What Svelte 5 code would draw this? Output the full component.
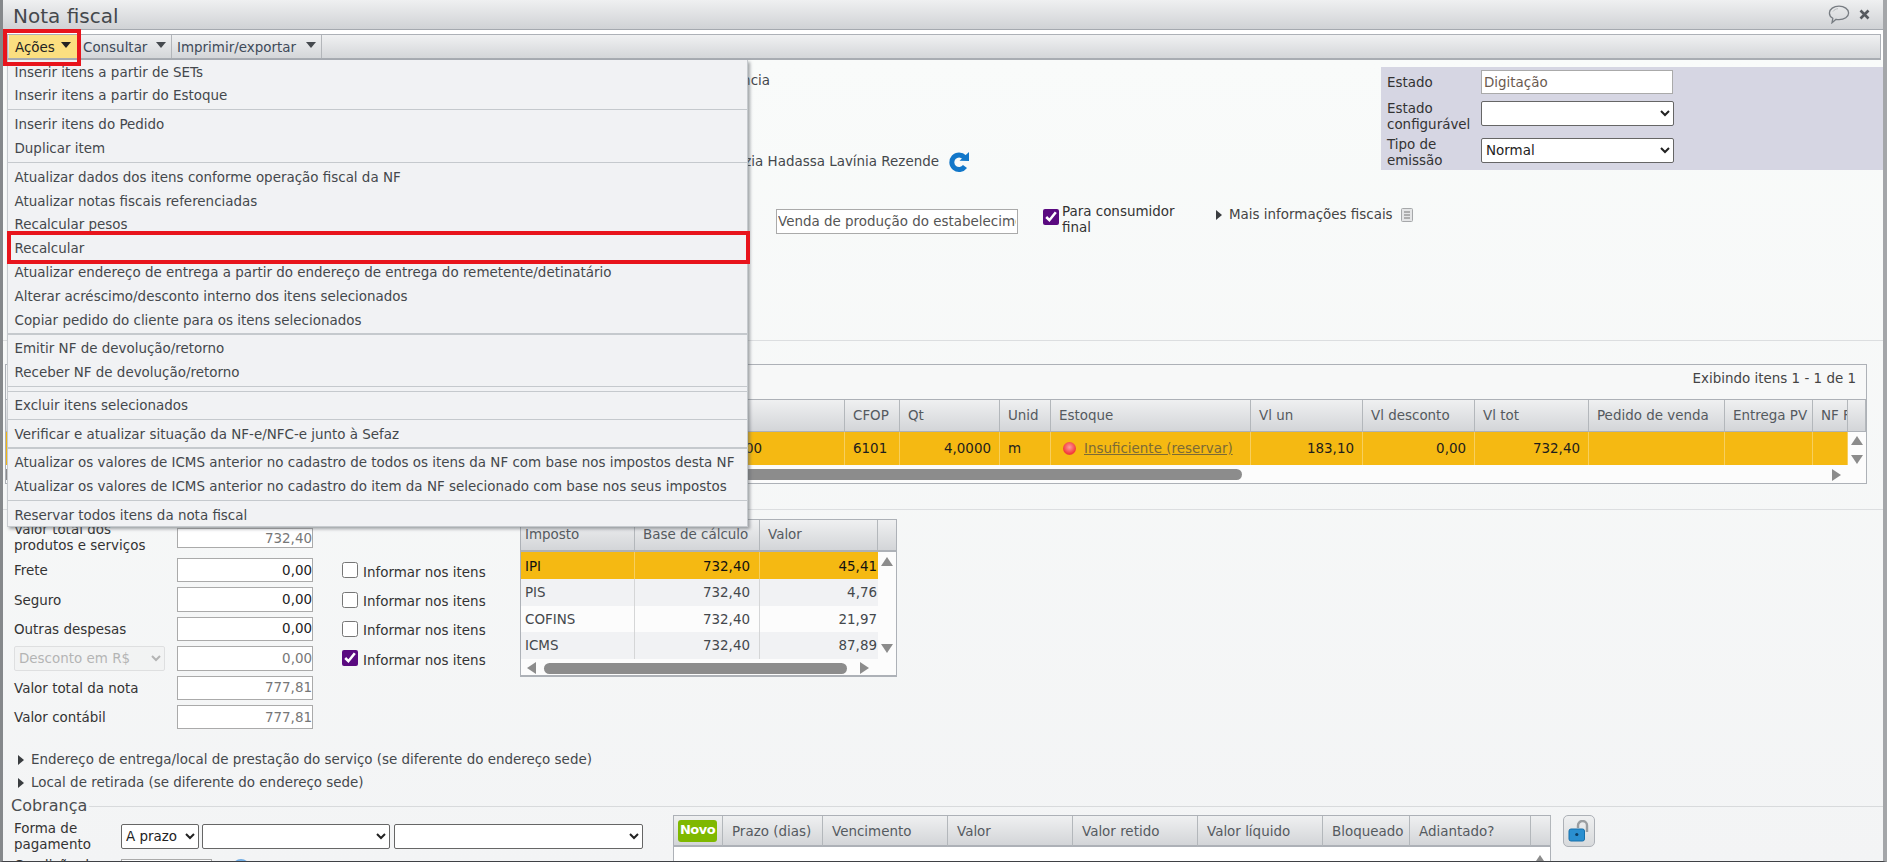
<script>
  const menu = [
    'Inserir itens a partir de SETs','Inserir itens a partir do Estoque','-',
    'Inserir itens do Pedido','Duplicar item','-',
    'Atualizar dados dos itens conforme operação fiscal da NF','Atualizar notas fiscais referenciadas','Recalcular pesos','Recalcular','Atualizar endereço de entrega a partir do endereço de entrega do remetente/detinatário','Alterar acréscimo/desconto interno dos itens selecionados','Copiar pedido do cliente para os itens selecionados','=',
    'Emitir NF de devolução/retorno','Receber NF de devolução/retorno','-','-',
    'Excluir itens selecionados','-',
    'Verificar e atualizar situação da NF-e/NFC-e junto à Sefaz','=',
    'Atualizar os valores de ICMS anterior no cadastro de todos os itens da NF com base nos impostos desta NF','Atualizar os valores de ICMS anterior no cadastro do item da NF selecionado com base nos seus impostos','-',
    'Reservar todos itens da nota fiscal'
  ];
  const fin = [
    { label: 'Frete', value: '0,00', checked: false },
    { label: 'Seguro', value: '0,00', checked: false },
    { label: 'Outras despesas', value: '0,00', checked: false }
  ];
  const taxes = [
    ['IPI','732,40','45,41','sel'],
    ['PIS','732,40','4,76','alt'],
    ['COFINS','732,40','21,97',''],
    ['ICMS','732,40','87,89','alt']
  ];
  const parcelas = ['Prazo (dias)','Vencimento','Valor','Valor retido','Valor líquido','Bloqueado','Adiantado?'];
</script>

<div class="window">
  <header class="titlebar">
    <h1>Nota fiscal</h1>
    <div class="title-icons">
      <svg width="22" height="19" viewBox="0 0 22 19"><path d="M11 1.2c5.300 0 9.600 2.900 9.600 6.700s-4.300 6.700-9.600 6.700c-1 0-2-.1-2.900-.3L4 17.800l.8-4.500C2.700 12.100 1.400 10.100 1.400 7.900 1.400 4.100 5.700 1.200 11 1.200z" fill="none" stroke="#777c82" stroke-width="1.300"/><path d="M5 6.500c1-1.700 3-2.700 5-2.800" fill="none" stroke="#b9bcc0" stroke-width="1"/></svg>
      <svg width="11" height="11" viewBox="0 0 11 11"><path d="M1.500 1.500l8 8M9.500 1.500l-8 8" stroke="#55595e" stroke-width="2.600"/></svg>
    </div>
  </header>

  <div class="gap"></div>
  <nav class="toolbar">
    <button class="tb active"><span>Ações</span><i class="caret"></i></button>
    <button class="tb w93"><span>Consultar</span><i class="caret"></i></button>
    <button class="tb w150"><span>Imprimir/exportar</span><i class="caret"></i></button>
  </nav>

  <main>
    <section class="top">
      <div class="top-left">
        <div class="hidden-line">Referência</div>
        <div class="person"><span>Luzia Hadassa Lavínia Rezende</span>
          <svg width="22" height="21" viewBox="0 0 22 21"><path d="M17 14.500a7.300 7.300 0 1 1-.6-9.300" fill="none" stroke="#1277c9" stroke-width="5"/><path d="M11.500 8.800 21 9V0z" fill="#1277c9"/></svg>
        </div>
        <div class="nature">
          <input class="nat" value="Venda de produção do estabelecimento" />
          <label class="final"><input type="checkbox" checked /><span>Para consumidor<br />final</span></label>
          <div class="more"><i class="tri-r"></i><span>Mais informações fiscais</span>
            <svg width="12" height="14" viewBox="0 0 12 14"><rect x=".5" y=".5" width="11" height="13" rx="1" fill="#e4e5e6" stroke="#a6a8aa"/><path d="M3 4h6M3 7h6M3 10h6" stroke="#777" /></svg>
          </div>
        </div>
      </div>
      <div class="status">
        <div class="st-row"><span>Estado</span><input class="st-in" value="Digitação" readonly /></div>
        <div class="st-row"><span>Estado configurável</span><select class="st-sel"><option></option></select></div>
        <div class="st-row last"><span>Tipo de emissão</span><select class="st-sel"><option>Normal</option></select></div>
      </div>
    </section>

    <section class="items">
      <div class="grid-box">
        <div class="pager">Exibindo itens 1 - 1 de 1</div>
        <div class="igrid ihead">
          <div></div><div>CFOP</div><div>Qt</div><div>Unid</div><div>Estoque</div><div>Vl un</div><div>Vl desconto</div><div>Vl tot</div><div>Pedido de venda</div><div>Entrega PV</div><div class="clip">NF R</div><div></div>
        </div>
        <div class="igrid irow">
          <div class="ncm">7214.10.00</div><div>6101</div><div class="r">4,0000</div><div>m</div>
          <div class="stock"><i class="dot"></i><a href="#top">Insuficiente (reservar)</a></div>
          <div class="r">183,10</div><div class="r">0,00</div><div class="r">732,40</div><div></div><div></div><div></div>
          <div class="vscroll"><i class="tri-u"></i><i class="tri-d"></i></div>
        </div>
        <div class="hscroll"><div class="thumb long"></div><i class="tri-r big"></i></div>
      </div>
    </section>

    <section class="totals">
      <div class="fin">
        <div class="lbl">Valor total dos<br />produtos e serviços</div><input class="num ro short" value="732,40" readonly /><div></div>
        {#each fin as f}
          <div class="lbl">{f.label}</div><input class="num" value={f.value} />
          <label class="inform"><input type="checkbox" checked={f.checked} /><span>Informar nos itens</span></label>
        {/each}
        <select class="disc" disabled><option>Desconto em R$</option></select><input class="num ro" value="0,00" readonly />
        <label class="inform"><input type="checkbox" checked /><span>Informar nos itens</span></label>
        <div class="lbl">Valor total da nota</div><input class="num ro" value="777,81" readonly /><div></div>
        <div class="lbl">Valor contábil</div><input class="num ro" value="777,81" readonly /><div></div>
      </div>
      <div class="tax">
        <div class="tgrid thead"><div>Imposto</div><div>Base de cálculo</div><div>Valor</div><div></div></div>
        <div class="tbody">
          <div class="trows">
            {#each taxes as t}
              <div class="tgrid3 trow {t[3]}"><div>{t[0]}</div><div class="r">{t[1]}</div><div class="r">{t[2]}</div></div>
            {/each}
          </div>
          <div class="vscroll tall"><i class="tri-u"></i><i class="tri-d"></i></div>
        </div>
        <div class="hscroll small"><i class="tri-l big"></i><div class="thumb"></div><i class="tri-r big"></i></div>
      </div>
    </section>

    <div class="acc first"><i class="tri-r"></i>Endereço de entrega/local de prestação do serviço (se diferente do endereço sede)</div>
    <div class="acc"><i class="tri-r"></i>Local de retirada (se diferente do endereço sede)</div>

    <div class="legend"><span>Cobrança</span><i></i></div>
    <section class="billing">
      <div class="bill-left">
        <div class="pay">
          <div class="lbl pl">Forma de<br />pagamento</div>
          <select class="s1"><option>A prazo</option></select>
          <select class="s2"><option></option></select>
          <select class="s3"><option></option></select>
        </div>
        <div class="pay second">
          <div class="lbl pl cl">Condição de</div>
          <input class="cond" />
          <i class="globe"></i>
        </div>
      </div>
      <div class="pgrid">
        <div class="novo-cell"><span class="novo">Novo</span></div>
        {#each parcelas as p}<div>{p}</div>{/each}
        <div></div>
        <div class="pscroll"><i class="tri-u"></i></div>
      </div>
      <div class="lock">
        <svg width="22" height="22" viewBox="0 0 22 22"><path d="M10 8V5.500a4.500 4.500 0 0 1 9 0V12" fill="none" stroke="#9a9da0" stroke-width="2.400"/><rect x="1" y="9" width="15.500" height="12" rx="2" fill="#2a8fd0" stroke="#1670ab"/><circle cx="8.800" cy="14.500" r="1.600" fill="#0c3d63"/></svg>
      </div>
    </section>
  </main>

  <div class="menu">
    {#each menu as m}
      {#if m === '-'}<div class="sep"></div>
      {:else if m === '='}<div class="sep thick"></div>
      {:else}<div class="mi">{m}</div>{/if}
    {/each}
  </div>
  <div class="mark mark-a"></div>
  <div class="mark mark-b"></div>
</div>

<style>
  :global(body){margin:0;background:#fff;}
  *{box-sizing:border-box;}
  .window{position:relative;width:1887px;height:862px;overflow:hidden;border-left:3px solid #85888b;border-right:4px solid #a4a6a9;border-bottom:1px solid #3f4145;font:13.450px/16px "DejaVu Sans",sans-serif;color:#3c4043;background:#fff;}
  .titlebar{height:30px;display:flex;justify-content:space-between;align-items:center;padding:0 13px 0 10px;background:linear-gradient(#eff0f1,#d0d2d5);border-bottom:1px solid #a5a9af;}
  h1{margin:2px 0 0;font:400 20px/26px "DejaVu Sans",sans-serif;color:#44484c;}
  .title-icons{display:flex;align-items:center;gap:9px;margin-top:-1px;}
  .gap{height:4px;}
  .toolbar{height:26px;margin:0 2px 0 4px;display:flex;padding-left:1px;border:1px solid #adb1b7;border-bottom:2px solid #a8acb2;background:linear-gradient(#f0f1f2,#d4d6d9);}
  .tb{height:23px;border:0;border-right:1px solid #b3b6ba;background:none;padding:2px 6px 0 6px;display:flex;align-items:center;justify-content:space-between;font:inherit;color:#3e4a59;width:69px;}
  .tb.active{background:#fbdf80;color:#222;}
  .tb.w93{width:94px;padding-left:5px;padding-right:5px;}
  .tb.w150{width:150px;padding-left:5px;padding-right:5px;}
  .caret{width:0;height:0;border:5px solid transparent;border-top:6px solid #222;border-bottom:0;margin-top:-6px;}
  .tb:not(.active) .caret{border-top-color:#45494e;}
  main{height:802px;background:linear-gradient(#f9fbfa,#f3f4f5);}
  .top{height:281px;display:flex;border-bottom:1px solid #dcdee0;}
  .top-left{width:1378px;}
  .hidden-line{margin:13px 0 0;width:767px;text-align:right;color:#44484c;}
  .person{display:flex;align-items:center;gap:9px;justify-content:flex-end;width:967px;margin-top:62px;height:22px;color:#44484c;}
  .nature{display:flex;align-items:flex-start;margin:36px 0 0 773px;}
  .nat{flex:none;width:242px;height:25px;border:1px solid #aaa;background:#fff;font:inherit;color:#555;padding:0 1px;}
  .final{display:flex;flex:none;gap:3px;margin-left:25px;color:#333;white-space:nowrap;}
  .final input,.inform input{appearance:auto;flex:none;width:16px;height:16px;margin:0;accent-color:#5a0a80;}
  .final span{margin-top:-5px;width:112px;}
  .more{display:flex;flex:none;align-items:center;gap:7px;margin:-4px 0 0 42px;height:20px;color:#444;white-space:nowrap;}
  .more svg{margin-left:1px;}
  .tri-r,.tri-l,.tri-u,.tri-d{display:block;width:0;height:0;border:solid transparent;}
  .more .tri-r,.acc .tri-r{border-width:5px 0 5px 6px;border-left-color:#3a3d40;}
  .tri-r.big{border-width:6px 0 6px 9px;border-left-color:#8c8c8c;}
  .tri-l.big{border-width:6px 9px 6px 0;border-right-color:#8c8c8c;}
  .tri-u{border-width:0 6px 9px;border-bottom-color:#8c8c8c;}
  .tri-d{border-width:9px 6px 0;border-top-color:#8c8c8c;}
  .status{width:502px;height:103px;margin-top:7px;background:#d6d6e3;padding:3px 0 0 6px;display:flex;flex-direction:column;gap:7px;}
  .st-row{display:flex;align-items:flex-start;height:28px;color:#333;}
  .st-row:first-child{height:24px;}
  .st-row.last{padding-top:1px;margin-top:1px;}
  .st-row span{width:94px;line-height:16px;margin-top:5px;}
  .st-row:nth-child(2) span{margin-top:0;}
  .st-row.last span{margin-top:-1px;}
  .st-in{width:192px;height:24px;border:1px solid #aaa;background:#fff;font:inherit;color:#6a5a50;padding:0 2px;}
  .st-sel{width:193px;height:25px;font:inherit;color:#222;background:#fff;border:1px solid #666;border-radius:2px;}
  .items{height:169px;padding:23px 16px 0 2px;border-bottom:1px solid #dcdee0;}
  .grid-box{height:120px;border:1px solid #adb1b7;background:#fcfcfc;}
  .pager{height:34px;line-height:28px;text-align:right;padding-right:10px;color:#444;background:#f7f8f8;}
  .igrid{display:grid;grid-template-columns:839px 55px 100px 51px 200px 112px 112px 114px 136px 88px 35px 18px;}
  .ihead{height:33px;background:linear-gradient(#eff0f1,#d3d5d8);border-top:1px solid #adb1b7;border-bottom:1px solid #adb1b7;}
  .ihead>div{border-right:1px solid #b3b7bb;padding:0 8px;line-height:31px;color:#555a5f;white-space:nowrap;overflow:hidden;}
  .ihead .clip{padding-right:0;}
  .irow{height:33px;background:#f5b912;color:#1d1d1d;}
  .irow>div{border-right:1px solid #f7cf5e;padding:0 8px;line-height:33px;}
  .irow .r,.r{text-align:right;}
  .irow .ncm{padding-right:82px;text-align:right;}
  .stock{display:flex;align-items:center;gap:8px;padding-left:12px !important;}
  .stock a{color:#7b6a36;text-decoration:underline;white-space:nowrap;}
  .dot{width:13px;height:13px;border-radius:50%;background:radial-gradient(circle at 50% 40%,#ff9a9a,#f33b3b 65%,#d9534f);flex:none;}
  .irow .vscroll{background:#fcfcfc;border:0;padding:4px 0 0;}
  .vscroll{display:flex;flex-direction:column;align-items:center;gap:10px;}
  .hscroll{height:19px;display:flex;align-items:center;padding:0 25px 0 0;}
  .hscroll .tri-r{margin-left:auto;}
  .thumb{height:11px;border-radius:0 6px 6px 0;background:#8c8c8c;}
  .thumb.long{width:1236px;}
  .totals{display:flex;height:238px;}
  .fin{width:517px;padding:18px 0 0 11px;display:grid;grid-template-columns:163px 136px auto;grid-template-rows:25px repeat(6,24.400px);row-gap:5px;justify-content:start;align-items:center;}
  .fin>*:nth-child(-n+3){align-self:start;}
  .fin .lbl:first-child{height:30px;margin-top:-6px;padding-top:0;color:#333;}
  .lbl{color:#333;white-space:nowrap;padding-top:2px;}
  .num{width:136px;height:24.400px;border:1px solid #aaa;background:#fff;text-align:right;font:inherit;color:#222;padding:0;}
  .num.ro{color:#777;}
  .num.short{height:20px;}
  .inform{display:flex;gap:5px;margin-left:29px;align-items:center;color:#333;white-space:nowrap;}
  .inform span{margin-top:5px;}
  .disc{width:151px;height:25px;font:inherit;color:#999;background:#f2f3f3;border:1px solid #d5d6d7;border-radius:2px;}
  .tax{width:377px;height:158px;margin-top:9px;border:1px solid #adb1b7;border-bottom-width:2px;background:#fcfcfc;overflow:hidden;}
  .tgrid{display:grid;grid-template-columns:114px 125px 118px 18px;height:32px;background:linear-gradient(#eff0f1,#d3d5d8);border-bottom:2px solid #adb1b7;}
  .thead>div{border-right:1px solid #b3b7bb;padding:0 8px;line-height:29px;color:#555a5f;white-space:nowrap;}
  .thead>div:first-child{padding-left:4px;}
  .thead>div:last-child{border:0;}
  .tbody{display:flex;height:107px;}
  .trows{width:357px;}
  .tgrid3{display:grid;grid-template-columns:114px 125px 118px;height:26.800px;line-height:27px;}
  .tgrid3>div{padding:0 9px 0 4px;border-right:1px solid #d5d6d7;color:#44484c;}
  .tgrid3>div:last-child{padding-right:1px;border:0;}
  .trow.sel{background:#f5b912;line-height:29px;}
  .trow.sel>div{color:#111;border-color:#f7cf5e;}
  .trow.alt{background:#f1f2f4;}
  .vscroll.tall{flex:1;justify-content:space-between;padding:5px 0 6px;}
  .hscroll.small{padding:0 27px 0 6px;gap:8px;height:18px;}
  .hscroll.small .thumb{width:304px;border-radius:6px;}
  .hscroll.small .tri-r{margin-left:5px;}
  .acc{display:flex;align-items:center;gap:7px;height:24px;padding-left:15px;color:#44484c;white-space:nowrap;}
  .acc.first{height:23px;}
  .legend{display:flex;align-items:flex-end;height:20px;padding-left:8px;color:#4a4d50;font-size:16px;line-height:20px;margin-top:1px;}
  .legend i{flex:1;height:1px;background:#d8dadc;margin:0 0 9px 2px;}
  .billing{display:flex;padding-left:11px;margin-top:-1px;}
  .bill-left{width:659px;padding-top:5px;}
  .pay{display:flex;align-items:center;}
  .pl{width:107px;padding-top:1px;margin-bottom:-1px;}
  .pay select{height:25px;font:inherit;color:#222;background:#fff;border:1px solid #666;border-radius:2px;}
  .s1{width:78px;}
  .s2{width:188px;margin-left:3px;}
  .s3{width:249px;margin-left:4px;}
  .pay.second{align-items:flex-start;margin-top:7px;}
  .cl{margin-top:-2px;}
  .cond{width:91px;height:25px;border:1px solid #aaa;background:#fff;}
  .globe{width:18px;height:18px;border-radius:50%;background:radial-gradient(circle at 50% 30%,#8fc0ec,#2f7fcf);margin-left:20px;}
  .pgrid{display:grid;grid-template-columns:49px 100px 125px 125px 125px 125px 87px 121px 20px;grid-template-rows:31px 16px;width:878px;height:47px;border:1px solid #adb1b7;border-width:1px 1px 0;background:#fff;}
  .pgrid>div{background:linear-gradient(#eff0f1,#d3d5d8);border-right:1px solid #b3b7bb;border-bottom:2px solid #adb1b7;padding:0 9px;line-height:31px;color:#555a5f;white-space:nowrap;}
  .pgrid>.novo-cell{padding:4px;}
  .pgrid>.pscroll{grid-column:9;grid-row:2;background:none;border:0;padding:8px 0 0 3px;}
  .novo{display:block;width:39px;height:22px;border-radius:3px;background:#7fb800;color:#fff;font:700 13px/20px "DejaVu Sans",sans-serif;text-align:center;letter-spacing:-.5px;}
  .lock{width:32px;height:32px;margin-left:12px;border:1px solid #adb1b7;border-radius:5px;background:linear-gradient(#eff0f1,#d8dadc);display:flex;align-items:center;justify-content:center;}
  .menu{position:absolute;left:4px;top:60px;width:741px;height:467px;padding-top:.6px;display:flex;flex-direction:column;background:#f1f2f4;border:1px solid #c6cace;border-top:0;box-shadow:2px 2px 3px rgba(90,95,100,.55);overflow:hidden;}
  .mi{flex:none;height:23.800px;line-height:23.800px;padding-left:6.500px;white-space:nowrap;color:#44484c;}
  .sep{flex:none;height:1px;background:#c5c9cd;margin:1.200px 0 2.800px;}
  .sep.thick{height:2px;margin:.5px 0 2px;}
  .mark{position:absolute;border:4px solid #e8141c;pointer-events:none;}
  .mark-a{left:0;top:29px;width:78px;height:37px;}
  .mark-b{left:4px;top:231px;width:743px;height:33px;}
</style>
